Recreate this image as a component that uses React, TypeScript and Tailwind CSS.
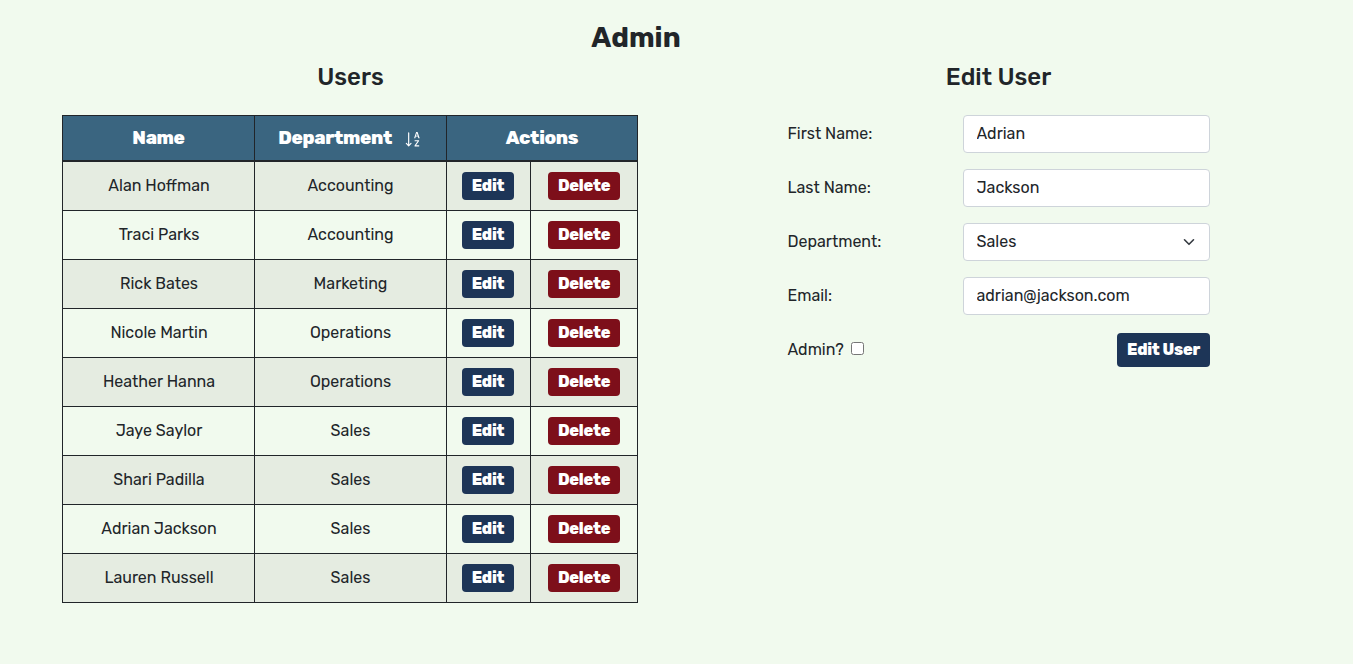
import React, { useState } from 'react';

type User = { first: string; last: string; department: string };

const users: User[] = [
  { first: 'Alan', last: 'Hoffman', department: 'Accounting' },
  { first: 'Traci', last: 'Parks', department: 'Accounting' },
  { first: 'Rick', last: 'Bates', department: 'Marketing' },
  { first: 'Nicole', last: 'Martin', department: 'Operations' },
  { first: 'Heather', last: 'Hanna', department: 'Operations' },
  { first: 'Jaye', last: 'Saylor', department: 'Sales' },
  { first: 'Shari', last: 'Padilla', department: 'Sales' },
  { first: 'Adrian', last: 'Jackson', department: 'Sales' },
  { first: 'Lauren', last: 'Russell', department: 'Sales' },
];

const control =
  'h-[38px] w-[247px] rounded-[4px] border border-[#ced4da] bg-white pl-[12.5px] pr-3 pb-px text-base text-[#212529] outline-none';
const headCell =
  'border-r border-b-2 border-[#212529] bg-[#3a6580] p-0 text-[18.72px] font-extrabold tracking-[-0.34px] text-white';
const cell = 'border-r border-b border-[#212529] p-0 text-center';
const button = 'block rounded-[4px] pb-px font-extrabold tracking-[-0.25px] text-white';

function SortIcon() {
  return (
    <svg className="mt-0.5 h-[18.72px] w-[18.72px]" viewBox="0 0 16 16" fill="currentColor" aria-hidden="true">
      <path
        fillRule="evenodd"
        d="M10.082 5.629 9.664 7H8.598l1.789-5.332h1.234L13.402 7h-1.12l-.419-1.371h-1.781zm1.57-.785L11 2.687h-.047l-.652 2.157h1.351z"
      />
      <path d="M12.96 14H9.028v-.691l2.579-3.72v-.054H9.098v-.867h3.785v.691l-2.567 3.72v.054h2.645V14zM4.5 2.5a.5.5 0 0 0-1 0v9.793l-1.146-1.147a.5.5 0 0 0-.708.708l2 1.999.007.007a.497.497 0 0 0 .7-.006l2-2a.5.5 0 0 0-.707-.708L4.5 12.293V2.5z" />
    </svg>
  );
}

function UserTable() {
  return (
    <table className="w-[576px] table-fixed border-separate border-spacing-0 border-t border-l border-[#212529]">
      <colgroup>
        <col className="w-[192px]" />
        <col className="w-[192px]" />
        <col className="w-[84px]" />
        <col className="w-[107px]" />
      </colgroup>
      <thead>
        <tr className="h-[46px]">
          <th className={headCell}>Name</th>
          <th className={headCell}>
            <div className="flex items-center justify-center gap-3">
              Department <SortIcon />
            </div>
          </th>
          <th className={headCell} colSpan={2}>Actions</th>
        </tr>
      </thead>
      <tbody>
        {users.map((user) => (
          <tr key={user.first + user.last} className="h-[49px] odd:bg-[#e5ece1]">
            <td className={`${cell} pl-px`}>{user.first} {user.last}</td>
            <td className={cell}>{user.department}</td>
            <td className={cell}>
              <button className={`${button} ml-[15px] h-7 w-[52px] bg-[#1d3557]`}>Edit</button>
            </td>
            <td className={cell}>
              <button className={`${button} ml-[17px] h-7 w-[72px] bg-[#7d0f1a]`}>Delete</button>
            </td>
          </tr>
        ))}
      </tbody>
    </table>
  );
}

function EditForm() {
  const [admin, setAdmin] = useState(false);
  return (
    <form className="flex w-[423px] flex-col gap-4 pl-[0.5px]" onSubmit={(e) => e.preventDefault()}>
      <label className="flex items-center justify-between">
        <span className="pb-px">First Name:</span>
        <input className={control} defaultValue="Adrian" />
      </label>
      <label className="flex items-center justify-between">
        <span className="pb-px">Last Name:</span>
        <input className={control} defaultValue="Jackson" />
      </label>
      <label className="flex items-center justify-between">
        <span className="pb-px">Department:</span>
        <span className="grid">
          <select className={`${control} col-start-1 row-start-1 appearance-none`} defaultValue="Sales">
            <option>Accounting</option>
            <option>Marketing</option>
            <option>Operations</option>
            <option>Sales</option>
          </select>
          <svg
            className="pointer-events-none col-start-1 row-start-1 mr-[15px] h-3 w-3 self-center justify-self-end"
            viewBox="0 0 12 12"
            fill="none"
            stroke="#343a40"
            strokeWidth="1.6"
            strokeLinecap="round"
            strokeLinejoin="round"
          >
            <path d="m1.5 3.8 4.5 4.5 4.5-4.5" />
          </svg>
        </span>
      </label>
      <label className="flex items-center justify-between">
        <span className="pb-px">Email:</span>
        <input className={control} defaultValue="adrian@jackson.com" />
      </label>
      <div className="flex h-[38px] items-center justify-between">
        <label className="flex items-center gap-[7.5px] pb-px">
          Admin?
          <input
            type="checkbox"
            className="mb-0.5 h-[13px] w-[13px]"
            checked={admin}
            onChange={(e) => setAdmin(e.target.checked)}
          />
        </label>
        <button className={`${button} h-[34px] w-[93px] bg-[#1d3557]`}>Edit User</button>
      </div>
    </form>
  );
}

export default function App() {
  return (
    <main className="h-screen min-h-[664px] w-full overflow-hidden bg-[#f1faee] pt-5 font-['Rubik','Roboto',sans-serif] text-base font-normal text-[#212529]">
      <h1 className="w-[1272px] pt-px text-center text-[28px] leading-[33px] font-bold tracking-[0.07px]">Admin</h1>
      <div className="flex items-start pl-[62px]">
        <section className="w-[576px]">
          <h2 className="mb-[23px] pt-2 pl-px text-center text-2xl leading-[30px] font-medium">Users</h2>
          <UserTable />
        </section>
        <section className="ml-[149px] w-[423px]">
          <h2 className="mb-[23px] pt-2 text-center text-2xl leading-[30px] font-medium">Edit User</h2>
          <EditForm />
        </section>
      </div>
    </main>
  );
}
